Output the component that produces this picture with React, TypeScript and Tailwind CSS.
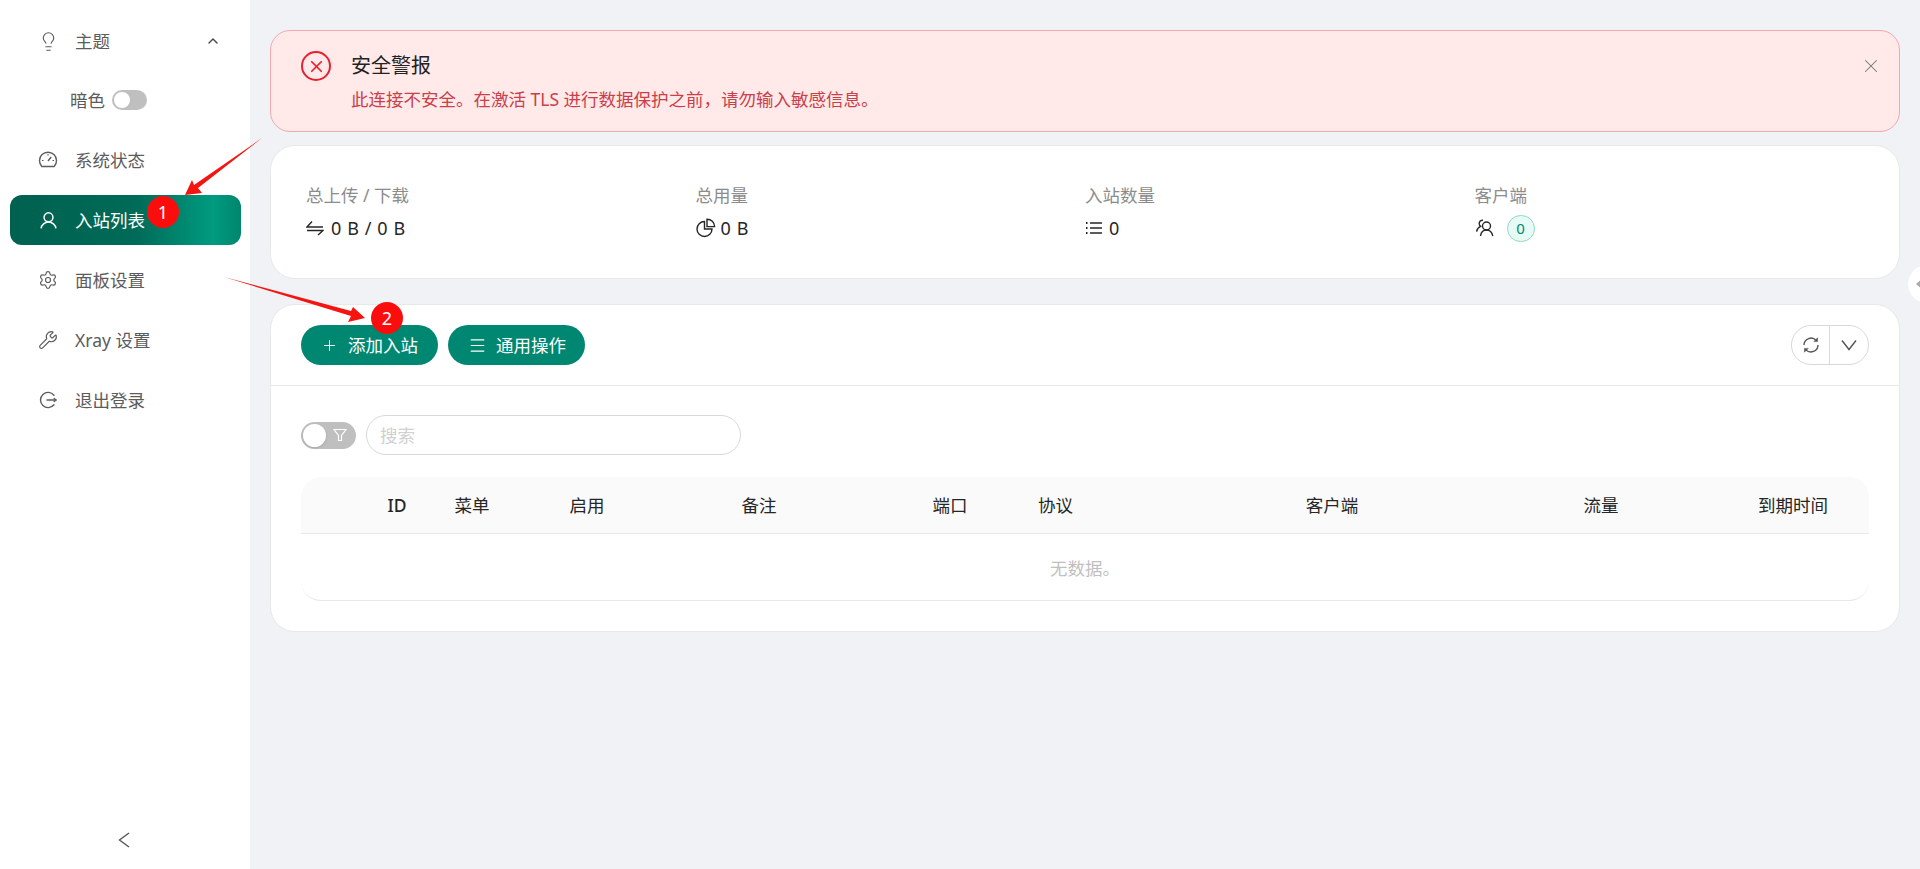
import { ChevronUp, Lightbulb, Settings, Wrench, Plus, Menu, X } from "lucide-react";

const columns = [
  { label: "", cls: "" },
  { label: "ID", cls: "text-center font-medium" },
  { label: "菜单", cls: "text-center" },
  { label: "启用", cls: "text-center" },
  { label: "备注", cls: "text-center" },
  { label: "端口", cls: "text-center" },
  { label: "协议", cls: "pl-[4px]" },
  { label: "客户端", cls: "text-center" },
  { label: "流量", cls: "text-center" },
  { label: "到期时间", cls: "text-center" },
];

function GaugeIcon() {
  return (
    <svg width="20" height="20" viewBox="0 0 20 20" fill="none" stroke="currentColor" strokeWidth="1.4" className="shrink-0">
      <path d="M3.8 16.5A8.5 8.5 0 1 1 16.2 16.5H3.8Z" />
      <path d="M10 11L13.2 7" />
      <path d="M10 4V5.5M4 10.5H5.5M14.5 10.5H16" strokeWidth="1.1" />
    </svg>
  );
}

function UserIcon() {
  return (
    <svg width="17" height="17" viewBox="0 0 16 16" fill="none" stroke="currentColor" strokeWidth="1.4" className="shrink-0">
      <circle cx="8" cy="5" r="4.2" />
      <path d="M1 15.5C1.5 12 4.5 9.5 8 9.5C11.5 9.5 14.5 12 15 15.5" />
    </svg>
  );
}

function LogoutIcon() {
  return (
    <svg width="18" height="18" viewBox="0 0 18 18" fill="none" stroke="currentColor" strokeWidth="1.4" strokeLinecap="round" className="shrink-0">
      <path d="M15 4.2A7.6 7.6 0 1 0 15 13.8" />
      <path d="M8 9H17" />
      <path d="M15.2 7.4L17 9L15.2 10.6" />
    </svg>
  );
}

function SwapIcon() {
  return (
    <svg width="18" height="18" viewBox="0 0 18 18" fill="none" stroke="currentColor" strokeWidth="1.4">
      <path d="M6 2.5L1 8H17" />
      <path d="M12 16L17 11.5H1" />
    </svg>
  );
}

function PieIcon() {
  return (
    <svg width="20" height="20" viewBox="0 0 20 20" fill="none" stroke="currentColor" strokeWidth="1.4">
      <path d="M8.5 3.5A7.5 7.5 0 1 0 16 11H8.5V3.5Z" />
      <path d="M11 1.2A7.5 7.5 0 0 1 18.6 8.6H11V1.2Z" />
    </svg>
  );
}

function BarsIcon() {
  return (
    <svg width="18" height="18" viewBox="0 0 18 18" fill="none" stroke="currentColor" strokeWidth="1.4">
      <path d="M5 4H17M5 9H17M5 14H17" />
      <path d="M1 4H2.5M1 9H2.5M1 14H2.5" strokeWidth="1.8" />
    </svg>
  );
}

function TeamIcon() {
  return (
    <svg width="20" height="20" viewBox="0 0 20 20" fill="none" stroke="currentColor" strokeWidth="1.4">
      <circle cx="11.5" cy="8" r="4" />
      <path d="M5.5 18C6 14.5 8.2 12 11.5 12C14.8 12 17 14.5 17.8 18" />
      <path d="M8 2.2C5.8 2 4.2 3.6 4.2 5.6C4.2 6.8 4.8 7.8 5.6 8.4C3.4 9.4 2 11.2 1.6 13.6" />
    </svg>
  );
}

function SyncIcon() {
  return (
    <svg width="18" height="18" viewBox="0 0 18 18" fill="none" stroke="currentColor" strokeWidth="1.4">
      <path d="M2 9A7 7 0 0 1 14.2 4.4" />
      <path d="M16 9A7 7 0 0 1 3.8 13.6" />
      <path d="M15.6 1.8V5.6H11.8Z" fill="currentColor" strokeWidth="0.5" />
      <path d="M2.4 16.2V12.4H6.2Z" fill="currentColor" strokeWidth="0.5" />
    </svg>
  );
}

function MenuRow({ icon, label, active }: { icon: React.ReactNode; label: string; active?: boolean }) {
  return (
    <div
      className={
        "ml-[10px] mr-[9px] mt-[10px] flex h-[50px] items-center gap-[18px] rounded-[12px] pl-[29px] text-[17.5px] " +
        (active
          ? "bg-[linear-gradient(90deg,#00614f_0%,#006b58_55%,#009b80_88%,#00856e_100%)] text-white"
          : "text-[#5c5c5c]")
      }
    >
      <span className="flex w-[18px] justify-center">{icon}</span>
      <span>{label}</span>
    </div>
  );
}

export default function App() {
  return (
    <div className="relative flex h-[869px] w-[1920px] overflow-hidden bg-[#f0f2f5] [font-family:'Noto_Sans','Noto_Sans_CJK_SC',sans-serif]">
      {/* sidebar */}
      <aside className="flex h-full w-[250px] shrink-0 flex-col bg-white pt-[6px]">
        <div className="relative">
          <MenuRow icon={<Lightbulb size={21} strokeWidth={1.3} className="shrink-0" />} label="主题" />
          <ChevronUp size={16} strokeWidth={2} className="absolute right-[29px] top-[27px] text-[#444]" />
        </div>
        <div className="mt-[9px] flex h-[50px] items-center gap-[7px] pl-[70px] text-[17.5px] text-[#5c5c5c]">
          <span>暗色</span>
          <span className="flex h-[20px] w-[35px] items-center rounded-full bg-[#bfbfbf] pl-[2px]">
            <span className="h-[16px] w-[16px] rounded-full bg-white" />
          </span>
        </div>
        <MenuRow icon={<GaugeIcon />} label="系统状态" />
        <MenuRow icon={<UserIcon />} label="入站列表" active />
        <MenuRow icon={<Settings size={20} strokeWidth={1.4} className="shrink-0" />} label="面板设置" />
        <MenuRow icon={<Wrench size={20} strokeWidth={1.4} className="shrink-0" />} label="Xray 设置" />
        <MenuRow icon={<LogoutIcon />} label="退出登录" />
        <div className="mt-auto flex h-[58px] items-center justify-center pr-[2px] text-[#555]">
          <svg width="12" height="16" viewBox="0 0 12 16" fill="none" stroke="currentColor" strokeWidth="1.4">
            <path d="M11 1L1.5 8L11 15" />
          </svg>
        </div>
      </aside>

      {/* content */}
      <main className="flex-1 pl-[20px] pr-[21px] pt-[30px]">
        <div className="flex h-[102px] items-start rounded-[20px] border border-[#f2a9ae] bg-[#ffe9e9] pl-[30px] pr-[17px]">
          <div className="mt-[20px] flex h-[30px] w-[30px] items-center justify-center rounded-full border-[2.5px] border-[#e8202e] text-[#e8202e]">
            <X size={19} strokeWidth={2.2} />
          </div>
          <div className="ml-[20px] flex-1 pt-[20px]">
            <div className="h-[30px] text-[20px] leading-[30px] text-[#222]">安全警报</div>
            <div className="mt-[5px] text-[17.5px] leading-[26px] text-[#c9404a]">
              此连接不安全。在激活 TLS 进行数据保护之前，请勿输入敏感信息。
            </div>
          </div>
          <X size={22} strokeWidth={1.1} className="mt-[24px] text-[#777]" />
        </div>

        <div className="mt-[13px] grid h-[134px] grid-cols-4 rounded-[25px] border border-[#e8e8e8] bg-white pl-[35px] pr-[35px] pt-[35px]">
          <div>
            <div className="text-[17.5px] leading-[28px] text-[#8c8c8c]">总上传 / 下载</div>
            <div className="mt-[5px] flex h-[28px] items-center gap-[7px] text-[#262626]">
              <SwapIcon />
              <span className="text-[18px] tracking-[0.6px]">0 B / 0 B</span>
            </div>
          </div>
          <div>
            <div className="text-[17.5px] leading-[28px] text-[#8c8c8c]">总用量</div>
            <div className="mt-[5px] flex h-[28px] items-center gap-[5px] text-[#262626]">
              <PieIcon />
              <span className="text-[18px] tracking-[0.6px]">0 B</span>
            </div>
          </div>
          <div>
            <div className="text-[17.5px] leading-[28px] text-[#8c8c8c]">入站数量</div>
            <div className="mt-[5px] flex h-[28px] items-center gap-[6px] text-[#262626]">
              <BarsIcon />
              <span className="text-[18px]">0</span>
            </div>
          </div>
          <div>
            <div className="text-[17.5px] leading-[28px] text-[#8c8c8c]">客户端</div>
            <div className="mt-[5px] flex h-[28px] items-center gap-[12px] text-[#262626]">
              <TeamIcon />
              <span className="flex h-[27px] w-[28px] items-center justify-center rounded-full border border-[#8fd8c6] bg-[#e6fbf5] text-[15px] text-[#008771]">
                0
              </span>
            </div>
          </div>
        </div>

        <div className="mt-[25px] h-[328px] rounded-[25px] border border-[#e8e8e8] bg-white">
          <div className="flex h-[81px] items-center justify-between border-b border-[#e8e8e8] px-[30px]">
            <div className="flex gap-[10px]">
              <button className="flex h-[40px] w-[137px] items-center gap-[10px] rounded-full bg-[#008771] pl-[20px] text-[17.5px] text-white">
                <Plus size={17} strokeWidth={1.3} />
                <span>添加入站</span>
              </button>
              <button className="flex h-[40px] w-[137px] items-center gap-[9px] rounded-full bg-[#008771] pl-[20px] text-[17.5px] text-white">
                <Menu size={19} strokeWidth={1.5} />
                <span>通用操作</span>
              </button>
            </div>
            <div className="flex h-[40px] w-[78px] rounded-full border border-[#d9d9d9] text-[#555]">
              <div className="flex w-[38px] items-center justify-center border-r border-[#d9d9d9]">
                <SyncIcon />
              </div>
              <div className="flex flex-1 items-center justify-center">
                <svg width="16" height="12" viewBox="0 0 16 12" fill="none" stroke="currentColor" strokeWidth="1.4">
                  <path d="M1 1.5L8 10.5L15 1.5" />
                </svg>
              </div>
            </div>
          </div>

          <div className="px-[30px] pt-[29px]">
            <div className="flex items-center gap-[10px]">
              <div className="relative flex h-[27px] w-[55px] items-center rounded-full bg-[#bfbfbf] pl-[2px]">
                <span className="h-[23px] w-[23px] rounded-full bg-white shadow" />
                <svg width="14" height="14" viewBox="0 0 14 14" fill="none" stroke="white" strokeWidth="1.2" className="ml-[7px]">
                  <path d="M1 1.5H13L8.5 7.5V12.5H5.5V7.5L1 1.5Z" />
                </svg>
              </div>
              <div className="flex h-[40px] w-[375px] items-center rounded-full border border-[#d9d9d9] pl-[13px] text-[17.5px] text-[#d0d0d0]">
                搜索
              </div>
            </div>

            <div className="mt-[22px] h-[124px] rounded-[20px] border-b border-[#e8e8e8]">
              <div className="grid h-[57px] grid-cols-[71px_50px_100px_130px_214px_168px_145px_306px_232px_152px] items-center rounded-t-[20px] border-b border-[#e8e8e8] bg-[#fafafa] text-[17.5px] text-[#262626]">
                {columns.map((col, i) => (
                  <div key={i} className={col.cls}>
                    {col.label}
                  </div>
                ))}
              </div>
              <div className="flex h-[68px] items-center justify-center text-[17.5px] text-[#bfbfbf]">无数据。</div>
            </div>
          </div>
        </div>
      </main>

      {/* collapse handle on the right edge */}
      <div className="absolute left-[1908px] top-[265px] flex h-[38px] w-[38px] items-center rounded-full bg-white pl-[8px]">
        <span className="h-0 w-0 border-y-[6px] border-r-[7px] border-y-transparent border-r-[#aaa]" />
      </div>

      {/* annotation arrows */}
      <svg className="pointer-events-none absolute left-0 top-0" width="1920" height="869" viewBox="0 0 1920 869">
        <polygon points="262,138 198,188 202,193 185,195 192,180 194,185" fill="#f5140f" />
        <polygon points="224,277 351,311 353,307 365,318 348,322 351,316" fill="#f5140f" />
      </svg>
      <div className="absolute left-[147px] top-[196px] flex h-[32px] w-[32px] items-center justify-center rounded-full bg-[#fb0d0d] text-[18px] text-white">
        1
      </div>
      <div className="absolute left-[371px] top-[302px] flex h-[32px] w-[32px] items-center justify-center rounded-full bg-[#fb0d0d] text-[18px] text-white">
        2
      </div>
    </div>
  );
}
